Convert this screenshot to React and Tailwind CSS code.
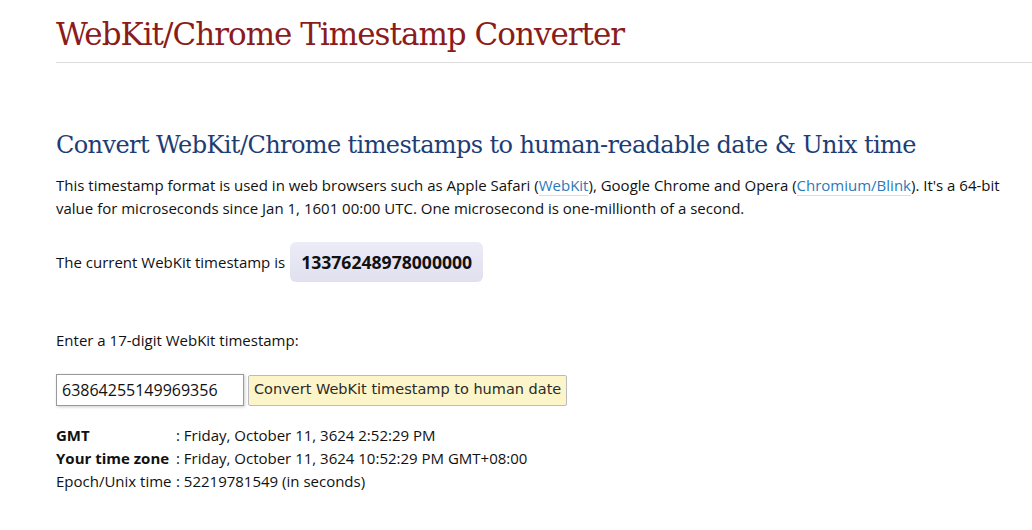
export default function App() {
  const body = { fontFamily: '"Open Sans", "Noto Sans", sans-serif' };
  const slab = { fontFamily: '"DejaVu Serif", "Liberation Serif", serif' };
  return (
    <div className="w-[1032px] h-[530px] bg-white text-[#111] overflow-hidden" style={body}>
      <div className="pl-14">
        <h1 className="text-[31px] leading-[40px] tracking-[-1px] pt-[14px] pb-[8px] text-[#8b1c1c]" style={slab}>
          WebKit/Chrome Timestamp Converter
        </h1>
        <div className="h-px bg-[#dddddd]" />
      </div>
      <div className="pl-14 pr-4">
        <h2 className="mt-[66px] text-[24px] leading-[32px] tracking-[-0.6px] text-[#1d3d74]" style={slab}>
          Convert WebKit/Chrome timestamps to human-readable date &amp; Unix time
        </h2>
        <p className="mt-[13px] text-[15px] leading-[23px]">
          This timestamp format is used in web browsers such as Apple Safari (
          <a className="text-[#2a7ab8] border-b border-[#ddd]">WebKit</a>), Google Chrome and Opera (
          <a className="text-[#2a7ab8] border-b border-[#ddd]">Chromium/Blink</a>). It's a 64-bit value for microseconds since Jan 1, 1601 00:00 UTC. One microsecond is one-millionth of a second.
        </p>
        <div className="mt-[22px] flex items-center text-[15px]">
          <span>The current WebKit timestamp is</span>
          <span className="ml-[5px] h-[40px] px-[11px] flex items-center rounded-[6px] bg-gradient-to-b from-[#ecebf7] to-[#e1e0ee] font-bold text-[17.6px] text-[#111]">
            13376248978000000
          </span>
        </div>
        <p className="mt-[47px] text-[15px] leading-[23px]">Enter a 17-digit WebKit timestamp:</p>
        <div className="mt-[22px] flex items-center gap-[4px]">
          <input
            className="w-[188px] h-[32px] border border-[#999] px-[5px] text-[16px] text-[#111] shadow-[1px_1px_3px_rgba(0,0,0,0.2)] outline-none"
            style={body}
            defaultValue="63864255149969356"
            readOnly
          />
          <button
            className="h-[31px] px-[5px] border border-[#bbb] rounded-[2px] bg-[#fcf5c9] text-[14.5px] text-[#2b2b2b]"
            style={{ fontFamily: '"DejaVu Sans", Verdana, sans-serif' }}
          >
            Convert WebKit timestamp to human date
          </button>
        </div>
        <div className="mt-[18px] text-[15px] leading-[23px]">
          <div className="flex"><span className="w-[120px] font-bold">GMT</span><span>: Friday, October 11, 3624 2:52:29 PM</span></div>
          <div className="flex"><span className="w-[120px] font-bold">Your time zone</span><span>: Friday, October 11, 3624 10:52:29 PM GMT+08:00</span></div>
          <div className="flex"><span className="w-[120px]">Epoch/Unix time</span><span>: 52219781549 (in seconds)</span></div>
        </div>
      </div>
    </div>
  );
}
